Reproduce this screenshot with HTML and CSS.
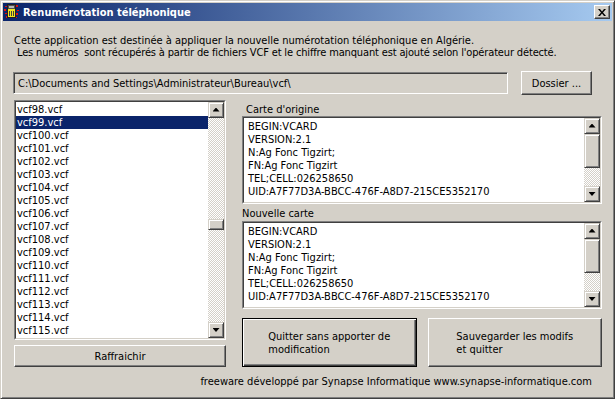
FILE: index.html
```html
<!doctype html>
<html>
    <head>
        <title>Renumérotation téléphonique</title>
        <link rel="stylesheet" href="styles.css">
    </head>
    <body>
        <div class="win">
            <div class="caption">
                <svg class="appicon" width="16" height="16" viewBox="0 0 16 16">
                    <rect x="3.5" y="0.5" width="8" height="13" fill="#f2e51c" stroke="#202020"/>
                    <rect x="4" y="1" width="7" height="4" fill="#505050"/>
                    <rect x="5" y="2" width="5" height="2" fill="#b8b8b8"/>
                    <rect x="5" y="7" width="1" height="5" fill="#404040"/>
                    <rect x="7" y="7" width="1" height="5" fill="#404040"/>
                    <rect x="9" y="7" width="1" height="5" fill="#404040"/>
                    <g fill="#e01010">
                        <rect x="1" y="2" width="2" height="1"/>
                        <rect x="0" y="5" width="2" height="2"/>
                        <rect x="1" y="9" width="2" height="1"/>
                        <rect x="2" y="12" width="1" height="2"/>
                        <rect x="12" y="1" width="2" height="2"/>
                        <rect x="13" y="6" width="2" height="1"/>
                        <rect x="12" y="9" width="2" height="2"/>
                        <rect x="12" y="13" width="1" height="1"/>
                    </g>
                </svg>
                <span class="caption-text">Renumérotation téléphonique</span>
                <span class="close">
                    <svg width="8" height="7" viewBox="0 0 8 7">
                        <path d="M0 0h2l2 2.5 2-2.5h2l-3 3.5 3 3.5h-2l-2-2.5-2 2.5h-2l3-3.5z" fill="#000"/>
                    </svg>
                </span>
            </div>
            <div class="client">
                <p class="intro">Cette application est destinée à appliquer la nouvelle numérotation téléphonique en Algérie.
<span class="intro-2"> Les numéros  sont récupérés à partir de fichiers VCF et le chiffre manquant est ajouté selon l'opérateur détecté.</span></p>
                <div class="pathrow">
                    <div class="field">C:\Documents and Settings\Administrateur\Bureau\vcf\</div>
                    <button class="btn dossier" type="button">Dossier ...</button>
                </div>
                <div class="main">
                    <div class="left">
                        <div class="sunken list">
                            <div class="sunken-in">
                                <ul class="items">
                                    <li>vcf98.vcf</li>
                                    <li class="sel">vcf99.vcf</li>
                                    <li>vcf100.vcf</li>
                                    <li>vcf101.vcf</li>
                                    <li>vcf102.vcf</li>
                                    <li>vcf103.vcf</li>
                                    <li>vcf104.vcf</li>
                                    <li>vcf105.vcf</li>
                                    <li>vcf106.vcf</li>
                                    <li>vcf107.vcf</li>
                                    <li>vcf108.vcf</li>
                                    <li>vcf109.vcf</li>
                                    <li>vcf110.vcf</li>
                                    <li>vcf111.vcf</li>
                                    <li>vcf112.vcf</li>
                                    <li>vcf113.vcf</li>
                                    <li>vcf114.vcf</li>
                                    <li>vcf115.vcf</li>
                                    <li>vcf116.vcf</li>
                                </ul>
                                <div class="vscroll">
                                    <div class="sb-btn"><i class="arrow up"></i></div>
                                    <div class="sb-track"><div class="thumb"></div></div>
                                    <div class="sb-btn"><i class="arrow down"></i></div>
                                </div>
                            </div>
                        </div>
                        <button class="btn refresh" type="button">Raffraichir</button>
                    </div>
                    <div class="right">
                        <div class="label label-orig">Carte d'origine</div>
                        <div class="sunken memo">
                            <div class="sunken-in">
                                <pre class="memo-text">BEGIN:VCARD
VERSION:2.1
N:Ag Fonc Tigzirt;
FN:Ag Fonc Tigzirt
TEL;CELL:026258650
UID:A7F77D3A-BBCC-476F-A8D7-215CE5352170</pre>
                                <div class="vscroll">
                                    <div class="sb-btn"><i class="arrow up"></i></div>
                                    <div class="sb-track"><div class="thumb"></div></div>
                                    <div class="sb-btn"><i class="arrow down"></i></div>
                                </div>
                            </div>
                        </div>
                        <div class="label label-new">Nouvelle carte</div>
                        <div class="sunken memo">
                            <div class="sunken-in">
                                <pre class="memo-text">BEGIN:VCARD
VERSION:2.1
N:Ag Fonc Tigzirt;
FN:Ag Fonc Tigzirt
TEL;CELL:026258650
UID:A7F77D3A-BBCC-476F-A8D7-215CE5352170</pre>
                                <div class="vscroll">
                                    <div class="sb-btn"><i class="arrow up"></i></div>
                                    <div class="sb-track"><div class="thumb"></div></div>
                                    <div class="sb-btn"><i class="arrow down"></i></div>
                                </div>
                            </div>
                        </div>
                        <div class="actions">
                            <button class="btn default" type="button"><span class="btn-lines">Quitter sans apporter de
modification</span></button>
                            <button class="btn" type="button"><span class="btn-lines">Sauvegarder les modifs
et quitter</span></button>
                        </div>
                    </div>
                </div>
                <p class="footer">freeware développé par Synapse Informatique www.synapse-informatique.com</p>
            </div>
        </div>
    </body>
</html>
```

FILE: styles.css
```css
* {
    box-sizing: border-box;
}
html,
body {
    margin: 0;
    padding: 0;
    background-color: #d4d0c8;
}
body {
    font-family: "DejaVu Sans", "Liberation Sans", sans-serif;
    font-stretch: condensed;
    font-size: 11px;
    line-height: 13px;
    color: #000;
}

/* window frame */
.win {
    width: 615px;
    height: 399px;
    display: flex;
    flex-direction: column;
    padding: 2px;
    border: 1px solid;
    border-color: #d4d0c8 #404040 #404040 #d4d0c8;
    box-shadow: inset 1px 1px #fff, inset -1px -1px #808080;
    background-color: #d4d0c8;
}
.caption {
    height: 18px;
    flex-shrink: 0;
    display: flex;
    align-items: center;
    padding: 0 2px 0 1px;
    background: linear-gradient(to right, #0a246a, #a6caf0);
    color: #fff;
}
.appicon {
    flex-shrink: 0;
}
.caption-text {
    margin-left: 3px;
    font-weight: bold;
    flex: 1;
    white-space: nowrap;
}
.close {
    width: 16px;
    height: 14px;
    display: flex;
    align-items: center;
    justify-content: center;
    background-color: #d4d0c8;
    border: 1px solid;
    border-color: #fff #404040 #404040 #fff;
    box-shadow: inset -1px -1px #808080;
}

.client {
    flex: 1;
    display: flex;
    flex-direction: column;
    padding: 0 10px 0 11px;
}
.intro {
    margin: 14px 0 0 0;
    line-height: 12px;
    white-space: pre;
}
.intro-2 {
    letter-spacing: -0.15px;
}

/* classic 3d bits */
.btn {
    font: inherit;
    color: #000;
    margin: 0;
    padding: 0;
    background-color: #d4d0c8;
    border: 1px solid;
    border-color: #fff #404040 #404040 #fff;
    box-shadow: inset -1px -1px #808080, inset 1px 1px #d4d0c8;
}
.btn.default {
    border: 1px solid #000;
    box-shadow: inset 1px 1px #fff, inset -1px -1px #404040, inset -2px -2px #808080;
}
.btn-lines {
    display: inline-block;
    text-align: left;
    white-space: pre;
}
.sunken {
    border: 1px solid;
    border-color: #808080 #fff #fff #808080;
}
.sunken-in {
    height: 100%;
    display: flex;
    border: 1px solid;
    border-color: #404040 #d4d0c8 #d4d0c8 #404040;
    background-color: #fff;
    overflow: hidden;
}

.pathrow {
    margin-top: 12px;
    height: 24px;
    display: flex;
    align-items: center;
    gap: 13px;
    padding-right: 10px;
}
.field {
    flex: 1;
    height: 22px;
    margin-left: -1px;
    padding: 4px 0 0 4px;
    white-space: nowrap;
    border: 1px solid;
    border-color: #808080 #fff #fff #808080;
    box-shadow: inset 1px 1px #404040, inset -1px -1px #d4d0c8;
}
.dossier {
    width: 71px;
    height: 24px;
}

.main {
    margin-top: 5px;
    display: flex;
    gap: 16px;
}
.left {
    width: 212px;
    display: flex;
    flex-direction: column;
    gap: 5px;
}
.list {
    height: 240px;
}
.items {
    flex: 1;
    list-style: none;
    margin: 0;
    padding: 1px 0 0 0;
    overflow: hidden;
}
.items li {
    height: 13px;
    padding-left: 1px;
    white-space: nowrap;
}
.items li.sel {
    background-color: #0a246a;
    color: #fff;
}
.refresh {
    height: 22px;
}

/* scrollbars */
.vscroll {
    width: 16px;
    flex-shrink: 0;
    display: flex;
    flex-direction: column;
}
.sb-btn,
.thumb {
    background-color: #d4d0c8;
    border: 1px solid;
    border-color: #d4d0c8 #404040 #404040 #d4d0c8;
    box-shadow: inset 1px 1px #fff, inset -1px -1px #808080;
}
.sb-btn {
    height: 16px;
    flex-shrink: 0;
    display: flex;
    align-items: center;
    justify-content: center;
}
.arrow {
    display: block;
    width: 7px;
    height: 4px;
    background-color: #000;
}
.arrow.up {
    clip-path: polygon(50% 0, 100% 100%, 0 100%);
    margin-top: -1px;
}
.arrow.down {
    clip-path: polygon(0 0, 100% 0, 50% 100%);
}
.sb-track {
    flex: 1;
    background-color: #fff;
    background-image: repeating-conic-gradient(#d4d0c8 0 25%, #fff 0 50%);
    background-size: 2px 2px;
}
.list .thumb {
    margin-top: 101px;
    height: 11px;
}
.memo .thumb {
    height: 34px;
}

.right {
    flex: 1;
    display: flex;
    flex-direction: column;
}
.label-orig {
    height: 16px;
    padding: 3px 0 0 4px;
}
.label-new {
    height: 17px;
    padding-top: 3px;
}
.memo {
    height: 88px;
}
.memo-text {
    flex: 1;
    margin: 0;
    padding: 2px 0 0 4px;
    font: inherit;
    overflow: hidden;
}
.actions {
    margin-top: 9px;
    height: 49px;
    display: flex;
    gap: 11px;
}
.actions .btn {
    flex: 1;
}

.footer {
    margin: 8px 0 0 0;
    padding-right: 10px;
    text-align: right;
    white-space: nowrap;
}
```
